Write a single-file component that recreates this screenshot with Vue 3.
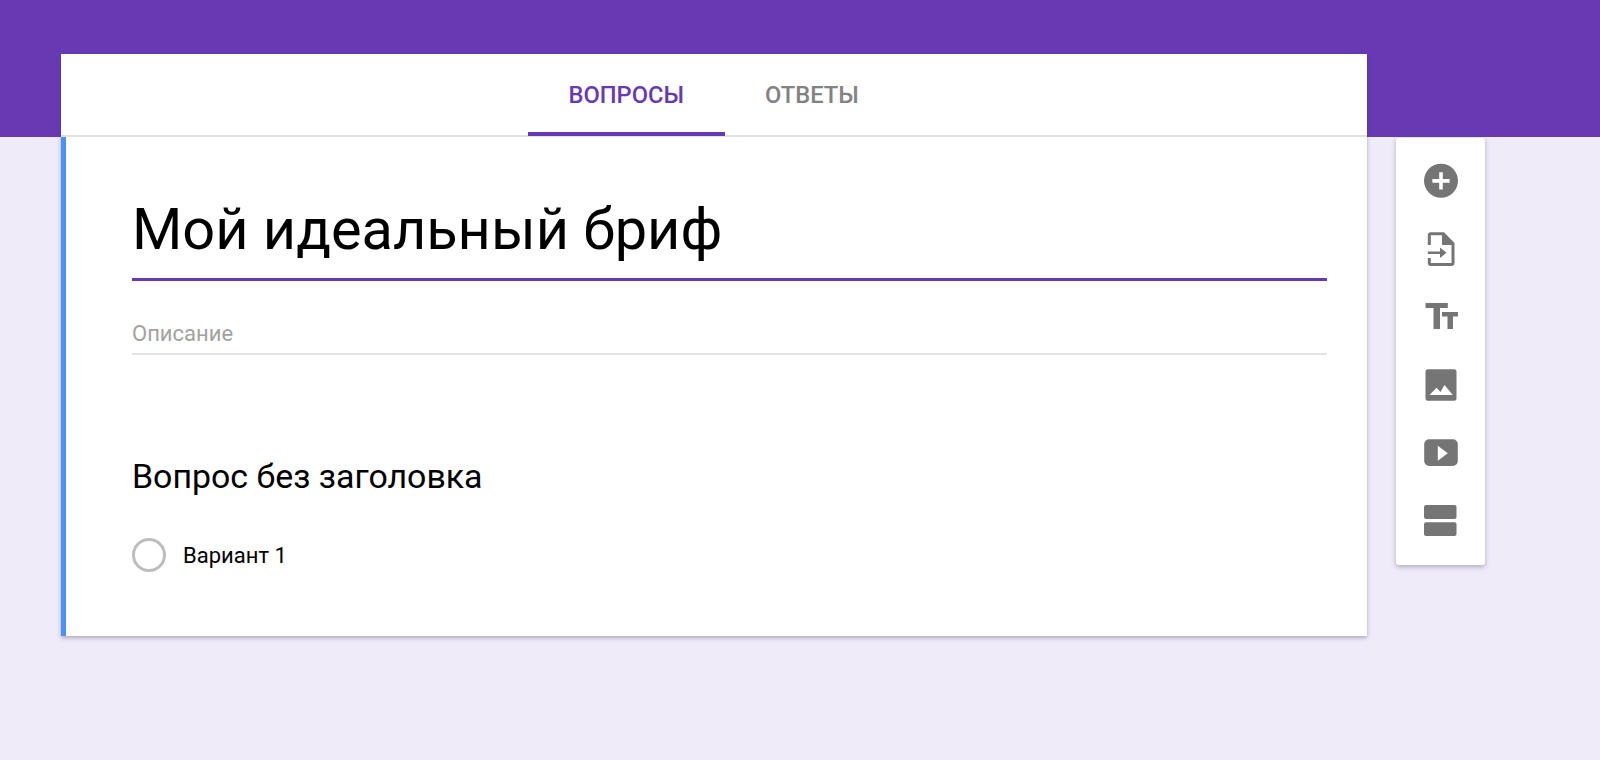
<script setup>
const tabs = [
  { label: 'ВОПРОСЫ', active: true },
  { label: 'ОТВЕТЫ', active: false }
]
</script>

<template>
  <div class="page">
    <div class="column">
      <div class="tabs">
        <div v-for="tab in tabs" :key="tab.label" class="tab" :class="{ active: tab.active }">{{ tab.label }}</div>
      </div>
      <div class="card">
        <div class="title">Мой идеальный бриф</div>
        <div class="description">Описание</div>
        <div class="question">Вопрос без заголовка</div>
        <div class="option">
          <span class="radio"></span>
          <span class="option-label">Вариант 1</span>
        </div>
      </div>
    </div>

    <div class="toolbar">
      <svg class="icon" viewBox="0 0 36 36" width="36" height="36">
        <path fill-rule="evenodd" d="M18 .8a17 17 0 1 0 0 34a17 17 0 0 0 0-34zM16.200 9.300h3.600v6.800h6.800v3.600h-6.800v6.800h-3.600v-6.800H9.400v-3.600h6.800z" />
      </svg>
      <svg class="icon" viewBox="0 0 36 36" width="36" height="36">
        <path d="M4.800 14V4.300a3 3 0 0 1 3-3H21L31.500 12v20a3 3 0 0 1-3 3H7.800a3 3 0 0 1-3-3v-5h3v5h20.700V14H19V4.300H7.800V14z" />
        <path d="M4.800 20.500H17v-4l6.500 5.200L17 27v-4H4.800z" />
      </svg>
      <svg class="icon" viewBox="0 0 36 36" width="36" height="36">
        <path d="M2.500 4h22.300v5H17v21h-6.500V9H2.500z" />
        <path d="M19 13h16v4.500h-5V30h-5.500V17.500H19z" />
      </svg>
      <svg class="icon" viewBox="0 0 36 36" width="36" height="36">
        <path fill-rule="evenodd" d="M5 2.300h26a2.500 2.500 0 0 1 2.500 2.500v26.400a2.500 2.500 0 0 1-2.500 2.500H5a2.500 2.500 0 0 1-2.500-2.500V4.800A2.500 2.500 0 0 1 5 2.300zM6.500 28h23.300l-8.300-10-4 7-4-4.300z" />
      </svg>
      <svg class="icon" viewBox="0 0 36 36" width="36" height="36">
        <path fill-rule="evenodd" d="M6.200 4.300h23.600a5 5 0 0 1 5 5V26a5 5 0 0 1-5 5H6.200a5 5 0 0 1-5-5V9.300a5 5 0 0 1 5-5zM14.800 10.700v15l10-7.500z" />
      </svg>
      <svg class="icon" viewBox="0 0 36 36" width="36" height="36">
        <rect x="1" y="2" width="32.500" height="14" rx="2" />
        <rect x="1" y="19.300" width="32.500" height="13.700" rx="2" />
      </svg>
    </div>
  </div>
</template>

<style>
body {
  margin: 0;
}
</style>

<style scoped>
.page {
  height: 760px;
  box-sizing: border-box;
  padding: 54px 0 0 61px;
  display: flex;
  align-items: flex-start;
  gap: 29px;
  overflow: hidden;
  background: linear-gradient(#673ab4 137px, #efebf9 137px);
  font-family: Roboto, "Noto Sans", sans-serif;
}
.column {
  width: 1306px;
  box-shadow: 0 2px 4px rgba(60, 50, 90, 0.35);
}
.tabs {
  height: 83px;
  box-sizing: border-box;
  background: #fff;
  border-bottom: 2px solid #e2e2e2;
  display: flex;
  padding-left: 467px;
}
.tab {
  height: 82px;
  box-sizing: border-box;
  padding: 26px 40.500px 0;
  font-size: 23.700px;
  line-height: 30px;
  font-weight: 500;
  color: #828282;
}
.tab.active {
  color: #673ab4;
  border-bottom: 4px solid #673ab4;
}
.card {
  height: 499px;
  box-sizing: border-box;
  background: #fff;
  border-left: 5px solid #4a90ff;
  padding: 54px 40px 0 66px;
}
.title {
  height: 90px;
  box-sizing: border-box;
  border-bottom: 3px solid #673ab4;
  font-size: 57.700px;
  line-height: 76px;
  color: #000;
}
.description {
  margin-top: 39px;
  height: 35px;
  box-sizing: border-box;
  border-bottom: 2px solid #e2e2e2;
  font-size: 22px;
  line-height: 28px;
  color: #a2a2a2;
}
.question {
  margin-top: 100px;
  font-size: 33.900px;
  line-height: 44px;
  color: #000;
}
.option {
  margin-top: 39px;
  display: flex;
  align-items: center;
  gap: 17px;
}
.radio {
  width: 34px;
  height: 34px;
  box-sizing: border-box;
  border: 3px solid #bdbdbd;
  border-radius: 50%;
}
.option-label {
  padding-top: 2px;
  font-size: 22px;
  line-height: 28px;
  color: #000;
}
.toolbar {
  margin-top: 84px;
  width: 89px;
  height: 427px;
  box-sizing: border-box;
  padding-top: 25px;
  background: #fff;
  border-radius: 3px;
  box-shadow: 0 2px 5px rgba(60, 50, 90, 0.35);
  display: flex;
  flex-direction: column;
  align-items: center;
  gap: 32px;
}
.icon {
  fill: #757575;
  display: block;
}
</style>
